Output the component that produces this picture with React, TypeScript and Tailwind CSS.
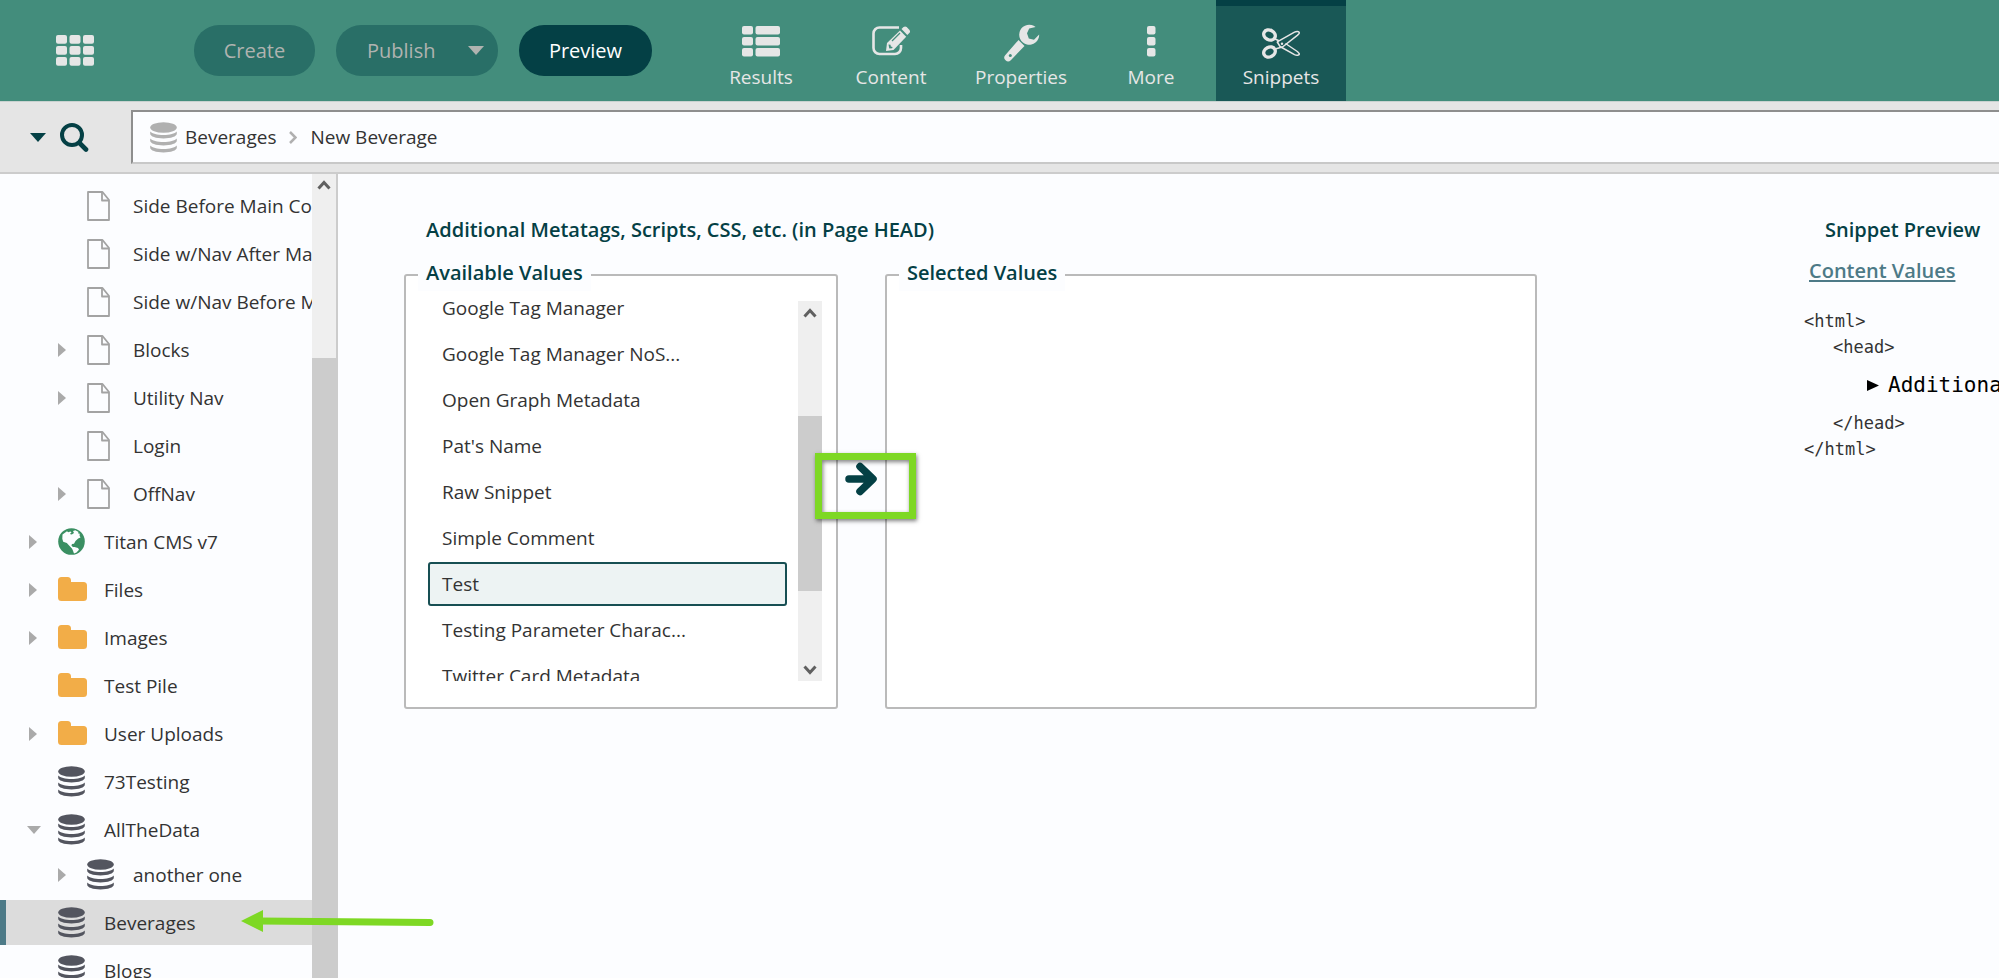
import type { ReactNode } from "react";

function AppsIcon() {
  return (
    <svg width="38" height="32" viewBox="0 0 38 32" fill="#e6e6e6" aria-hidden="true">
      {[0, 13.5, 27].map((x) =>
        [0, 11, 22].map((y) => <rect key={`${x}-${y}`} x={x} y={y} width="11" height="8.7" rx="2" />)
      )}
    </svg>
  );
}

function ResultsIcon() {
  return (
    <svg width="38" height="38" viewBox="0 0 38 38" fill="#e6e6e6" aria-hidden="true">
      {[2, 13, 24].map((y) => (
        <g key={y}>
          <rect x="0" y={y} width="11" height="8.5" rx="2" />
          <rect x="13.5" y={y} width="24.5" height="8.5" rx="2" />
        </g>
      ))}
    </svg>
  );
}

function ContentIcon() {
  return (
    <svg width="38" height="38" viewBox="0 0 38 38" aria-hidden="true">
      <path
        d="M27 3.5H7.5a6 6 0 0 0-6 6V24a6 6 0 0 0 6 6H23a6 6 0 0 0 6-6v-3"
        fill="none"
        stroke="#e6e6e6"
        strokeWidth="2.6"
      />
      <path d="M14 27l1-8L28 6.5l6.2 6.3L21.5 26z" fill="#e6e6e6" />
      <path d="M29.5 5l2-1.9a2.4 2.4 0 0 1 3.2 0l2.6 2.7a2.4 2.4 0 0 1 0 3.2l-2 2z" fill="#e6e6e6" />
      <path d="M20 17l8-8" stroke="#438d7c" strokeWidth="1.2" />
      <path d="M16.5 20.5l2 .2.3 1.8 1.8.4-.5 1.3-2.8.3z" fill="#438d7c" />
    </svg>
  );
}

function WrenchIcon() {
  return (
    <svg width="38" height="38" viewBox="0 0 38 38" aria-hidden="true">
      <path
        d="M33.6 3A10 10 0 1 0 37.2 10.6l-5.2 5.200-5.200-1.200-1.800-5.300 2.200-4.800z"
        fill="#e6e6e6"
      />
      <path d="M16.5 16l6 6L8.8 36.2a3.6 3.6 0 0 1-5.400-5.100z" fill="#e6e6e6" />
      <circle cx="8.3" cy="31.4" r="1.5" fill="#438d7c" />
    </svg>
  );
}

function MoreIcon() {
  return (
    <svg width="38" height="38" viewBox="0 0 38 38" fill="#e6e6e6" aria-hidden="true">
      {[2, 13, 24].map((y) => (
        <rect key={y} x="15" y={y} width="8.5" height="8.5" rx="2" />
      ))}
    </svg>
  );
}

function ScissorsIcon() {
  return (
    <svg width="38" height="38" viewBox="0 0 38 38" fill="none" stroke="#e6e6e6" aria-hidden="true">
      <ellipse cx="7.5" cy="11" rx="6" ry="4.8" strokeWidth="3.4" transform="rotate(28 7.5 11)" />
      <ellipse cx="7.5" cy="28" rx="6" ry="4.8" strokeWidth="3.4" transform="rotate(-28 7.5 28)" />
      <path
        d="M13 15l4 1.8 15.5-8.6c2-1 4.600-.8 4.800.6.1 1-1 1.700-2 2.600L20.5 23 13 25"
        strokeWidth="1.5"
        strokeLinejoin="round"
      />
      <path
        d="M15 17.5l3 5 14.500 8.200c2 1 4.600.8 4.800-.6.1-1-1-1.700-2-2.600L23.5 19.5"
        strokeWidth="1.5"
        strokeLinejoin="round"
      />
      <circle cx="16" cy="17.5" r="1" fill="#e6e6e6" stroke="none" />
      <circle cx="20" cy="19.7" r="1.2" fill="#e6e6e6" stroke="none" />
    </svg>
  );
}

function FileIcon() {
  return (
    <svg width="23" height="30" viewBox="0 0 23 30" fill="none" stroke="#a3a3a3" strokeWidth="1.8" strokeLinejoin="round" aria-hidden="true">
      <path d="M1 1h14.5L22 9v20H1z" />
      <path d="M15 1v8.5h7" />
    </svg>
  );
}

function FolderIcon() {
  return (
    <svg width="29" height="25" viewBox="0 0 29 25" aria-hidden="true">
      <path
        d="M0 3.5A3.5 3.5 0 0 1 3.5 0h6A3.5 3.5 0 0 1 13 3.5V5h12.5A3.5 3.5 0 0 1 29 8.5v12a3.5 3.5 0 0 1-3.5 3.5h-22A3.5 3.5 0 0 1 0 20.5z"
        fill="#f2ad48"
      />
    </svg>
  );
}

function DatabaseIcon({ color }: { color: string }) {
  return (
    <svg width="27" height="31" viewBox="0 0 27 31" fill={color} aria-hidden="true">
      <ellipse cx="13.5" cy="5.5" rx="13.3" ry="5.3" />
      {[0, 7, 14].map((dy) => (
        <path
          key={dy}
          transform={`translate(0 ${dy})`}
          d="M.2 9.5c2 2.200 7 3.500 13.300 3.500s11.300-1.300 13.300-3.500v2.200c0 2.600-5.800 4.700-13.300 4.700S.2 14.300.2 11.700z"
        />
      ))}
    </svg>
  );
}

function GlobeIcon() {
  return (
    <svg width="27" height="27" viewBox="0 0 27 27" aria-hidden="true">
      <circle cx="13.5" cy="13.5" r="13.3" fill="#3a8f62" />
      <path
        d="M4.5 6.5L9 3.2l1.200 1 2.300-.8 1 1.200-1.700 1.500 2 .4 2.200-1.600-1-1.800 2.300-.9 3.300 1.700-.7 1.300 1.900.6-.3 1.700 1 2-2.300 1-2.700 2.500-1.500 2.800-2 .3-.6 1.500 1.500 1.300 2.200.8-.6 1.500-2.800-1-2.600-2.600-2.300-2.600-3.600-1.300-.9-3z"
        fill="#fcfdff"
      />
      <path d="M13.5 19.5l3-.6 3.500 1.200 1 1.700-2.500 2.800-2.500 1-1.200-3.300z" fill="#fcfdff" />
    </svg>
  );
}

function Chevron({ down = false }: { down?: boolean }) {
  return (
    <svg width="14" height="10" viewBox="0 0 14 10" fill="none" stroke="#606060" strokeWidth="3" aria-hidden="true">
      <path d={down ? "M1.5 1.5L7 7.5l5.5-6" : "M1.5 8.5L7 2.500l5.5 6"} />
    </svg>
  );
}

type Kind = "file" | "folder" | "globe" | "data";
type TreeItem = { label: string; kind: Kind; level: 0 | 1; arrow?: "right" | "down"; tight?: boolean; selected?: boolean };

const tree: TreeItem[] = [
  { label: "Side Before Main Co", kind: "file", level: 1 },
  { label: "Side w/Nav After Ma", kind: "file", level: 1 },
  { label: "Side w/Nav Before M", kind: "file", level: 1 },
  { label: "Blocks", kind: "file", level: 1, arrow: "right" },
  { label: "Utility Nav", kind: "file", level: 1, arrow: "right" },
  { label: "Login", kind: "file", level: 1 },
  { label: "OffNav", kind: "file", level: 1, arrow: "right" },
  { label: "Titan CMS v7", kind: "globe", level: 0, arrow: "right" },
  { label: "Files", kind: "folder", level: 0, arrow: "right" },
  { label: "Images", kind: "folder", level: 0, arrow: "right" },
  { label: "Test Pile", kind: "folder", level: 0 },
  { label: "User Uploads", kind: "folder", level: 0, arrow: "right" },
  { label: "73Testing", kind: "data", level: 0 },
  { label: "AllTheData", kind: "data", level: 0, arrow: "down", tight: true },
  { label: "another one", kind: "data", level: 1, arrow: "right" },
  { label: "Beverages", kind: "data", level: 0, selected: true },
  { label: "Blogs", kind: "data", level: 0 },
];

function KindIcon({ kind }: { kind: Kind }) {
  if (kind === "file") return <FileIcon />;
  if (kind === "folder") return <FolderIcon />;
  if (kind === "globe") return <GlobeIcon />;
  return <DatabaseIcon color="#53555f" />;
}

function TreeRow({ item }: { item: TreeItem }) {
  return (
    <li className={item.tight ? "" : "mb-[3px]"}>
      <a
        href="#"
        className={`flex h-[45px] items-center whitespace-nowrap border-l-[6px] ${
          item.selected ? "border-[#4d7a87] bg-[#dcdcdc]" : "border-transparent"
        } ${item.level === 1 ? "pl-[50px]" : "pl-[21px]"}`}
      >
        <span className="flex w-[31px] shrink-0 items-center">
          {item.arrow === "right" && (
            <svg width="12" height="14" viewBox="0 0 12 14" fill="#aaaaaa" aria-hidden="true">
              <path d="M2 0l8 7-8 7z" />
            </svg>
          )}
          {item.arrow === "down" && (
            <svg width="14" height="8" viewBox="0 0 14 8" fill="#aaaaaa" aria-hidden="true">
              <path d="M0 0h14L7 8z" />
            </svg>
          )}
        </span>
        <span className="flex w-[46px] shrink-0 items-center">
          <KindIcon kind={item.kind} />
        </span>
        <span>{item.label}</span>
      </a>
    </li>
  );
}

const values = [
  "Google Tag Manager",
  "Google Tag Manager NoS...",
  "Open Graph Metadata",
  "Pat's Name",
  "Raw Snippet",
  "Simple Comment",
  "Test",
  "Testing Parameter Charac...",
  "Twitter Card Metadata",
];

function NavTab({ label, icon, active = false }: { label: string; icon: ReactNode; active?: boolean }) {
  return (
    <button
      type="button"
      className={`flex w-[130px] flex-col items-center border-t-[6px] pt-[18px] text-[#e6e6e6] ${
        active ? "border-[#044045] bg-[#195856]" : "border-transparent"
      }`}
    >
      {icon}
      <span className="mt-px leading-7">{label}</span>
    </button>
  );
}

function ValueBox({ title, className, children }: { title: string; className: string; children?: ReactNode }) {
  return (
    <fieldset className={`h-[450px] min-w-0 rounded-[3px] border-2 border-[#bababa] bg-white ${className}`}>
      <legend className="ml-3 bg-[#fcfdff] px-2 pb-1 text-[20px] font-semibold leading-7 text-[#044045]">{title}</legend>
      {children}
    </fieldset>
  );
}

export default function App() {
  return (
    <div className="flex h-screen flex-col overflow-hidden bg-[#fcfdff] font-['Open_Sans',sans-serif] text-[19px] leading-7 text-[#333333]">
      <header className="flex h-[102px] shrink-0 border-b border-[#c9d2d0] bg-[#438d7c]">
        <div className="flex items-center pl-14">
          <button type="button" aria-label="Applications" className="mr-[100px]">
            <AppsIcon />
          </button>
          <div className="flex gap-[21px] text-[20px]">
            <button type="button" className="h-[51px] w-[121px] rounded-[25px] bg-[#296f67] text-[#b0b3b0]">
              Create
            </button>
            <button
              type="button"
              className="flex h-[51px] w-[162px] items-center justify-between rounded-[25px] bg-[#296f67] pl-[31px] pr-[14px] text-[#b0b3b0]"
            >
              Publish
              <svg width="16" height="9" viewBox="0 0 16 9" fill="#b0b3b0" aria-hidden="true">
                <path d="M0 0h16L8 9z" />
              </svg>
            </button>
            <button type="button" className="h-[51px] w-[133px] rounded-[25px] bg-[#044045] text-white">
              Preview
            </button>
          </div>
        </div>
        <nav className="ml-[44px] flex">
          <NavTab label="Results" icon={<ResultsIcon />} />
          <NavTab label="Content" icon={<ContentIcon />} />
          <NavTab label="Properties" icon={<WrenchIcon />} />
          <NavTab label="More" icon={<MoreIcon />} />
          <NavTab label="Snippets" icon={<ScissorsIcon />} active />
        </nav>
      </header>

      <div className="flex h-[72px] shrink-0 items-start border-b-2 border-[#cccccc] bg-[#e5e5e5] pt-2">
        <button type="button" aria-label="Search" className="flex h-[54px] w-[131px] items-center gap-[14px] pl-[30px]">
          <svg width="16" height="9" viewBox="0 0 16 9" fill="#044045" aria-hidden="true">
            <path d="M0 0h16L8 9z" />
          </svg>
          <svg width="29" height="30" viewBox="0 0 29 30" fill="none" stroke="#044045" strokeLinecap="round" aria-hidden="true">
            <circle cx="12" cy="13" r="10" strokeWidth="4" />
            <path d="M19.5 21l6.5 6.500" strokeWidth="4.600" />
          </svg>
        </button>
        <div className="flex h-[54px] flex-1 items-center border-2 border-r-0 border-b-[#c8c8c8] border-l-[#8e8e8e] border-t-[#8e8e8e] bg-[#fcfdff] pl-[17px]">
          <DatabaseIcon color="#b0b0b0" />
          <a href="#" className="ml-2">Beverages</a>
          <svg width="8" height="13" viewBox="0 0 8 13" fill="none" stroke="#b0b0b0" strokeWidth="2.500" className="mx-[13px]" aria-hidden="true">
            <path d="M1 1l5.500 5.500L1 12" />
          </svg>
          <a href="#">New Beverage</a>
        </div>
      </div>

      <div className="relative flex min-h-0 flex-1">
        <aside className="flex w-[338px] shrink-0 border-r-2 border-[#cccccc]">
          <ul className="w-[312px] overflow-hidden pt-[9px]">
            {tree.map((item) => (
              <TreeRow key={item.label} item={item} />
            ))}
          </ul>
          <div className="flex flex-1 flex-col bg-[#efefef]">
            <span className="flex h-[184px] shrink-0 justify-center pt-[6px]">
              <Chevron />
            </span>
            <span className="flex-1 bg-[#cccccc]" />
          </div>
        </aside>

        <svg width="194" height="24" viewBox="0 0 194 24" className="absolute left-[241px] top-[735px]" aria-hidden="true">
          <path d="M18 12l171 1.500" stroke="#7ed824" strokeWidth="7" strokeLinecap="round" />
          <path d="M0 12L22 1v22z" fill="#7ed824" />
        </svg>

        <main className="flex min-w-0 flex-1 overflow-hidden pl-[66px] pt-[42px]">
          <section className="min-w-0 flex-1">
            <h2 className="pl-[22px] text-[20px] font-semibold leading-7 text-[#044045]">
              Additional Metatags, Scripts, CSS, etc. (in Page HEAD)
            </h2>
            <div className="mt-[15px] flex">
              <ValueBox title="Available Values" className="w-[434px] shrink-0">
                <div className="ml-[22px] mr-[14px] mt-[10px] flex h-[380px]">
                  <ul className="min-w-0 flex-1 overflow-hidden">
                    {values.map((v) => (
                      <li key={v} className="mb-[2px] first:-mt-[15px]">
                        <button
                          type="button"
                          className={`h-[44px] w-[359px] rounded-[3px] border-2 px-3 text-left ${
                            v === "Test" ? "border-[#174f53] bg-[#edf3f3]" : "border-transparent"
                          }`}
                        >
                          {v}
                        </button>
                      </li>
                    ))}
                  </ul>
                  <div className="flex w-[24px] shrink-0 flex-col items-center bg-[#efefef]">
                    <span className="h-[115px] pt-[7px]">
                      <Chevron />
                    </span>
                    <span className="h-[175px] w-full bg-[#cccccc]" />
                    <span className="flex flex-1 items-end pb-[6px]">
                      <Chevron down />
                    </span>
                  </div>
                </div>
              </ValueBox>
              <div className="relative flex w-[47px] shrink-0 justify-center pt-[203px]">
                <button type="button" aria-label="Add selected value" className="h-[34px] w-[33px]">
                  <svg width="33" height="34" viewBox="0 0 33 34" fill="none" stroke="#044045" strokeWidth="7.500" strokeLinejoin="round" strokeLinecap="round" aria-hidden="true">
                    <path d="M4 17h23M15 4.500L28 17 15 29.500" />
                  </svg>
                </button>
                <span className="absolute left-[-23px] top-[194px] h-[66px] w-[101px] border-[7px] border-[#7ed824] shadow-[1px_2px_4px_rgba(0,0,0,0.5),inset_1px_2px_4px_rgba(0,0,0,0.5)]" />
              </div>
              <ValueBox title="Selected Values" className="flex-1" />
            </div>
          </section>

          <section className="ml-[267px] w-[195px] shrink-0">
            <h2 className="pl-[21px] text-[20px] font-semibold leading-7 text-[#044045]">Snippet Preview</h2>
            <a href="#" className="mt-[13px] block pl-[5px] text-[20px] font-semibold leading-7 text-[#4d7a87] underline decoration-2 underline-offset-2">
              Content Values
            </a>
            <div className="mt-[23px] whitespace-nowrap font-['DejaVu_Sans_Mono',monospace] text-[17px] leading-[26px]">
              <p>&lt;html&gt;</p>
              <p className="pl-[29px]">&lt;head&gt;</p>
              <button type="button" className="my-[6px] flex h-[38px] items-center gap-[9px] pl-[63px] text-[21px] text-black">
                <svg width="12" height="11" viewBox="0 0 12 11" aria-hidden="true">
                  <path d="M0 0l12 5.500L0 11z" />
                </svg>
                Additional
              </button>
              <p className="pl-[29px]">&lt;/head&gt;</p>
              <p>&lt;/html&gt;</p>
            </div>
          </section>
        </main>
      </div>
    </div>
  );
}
